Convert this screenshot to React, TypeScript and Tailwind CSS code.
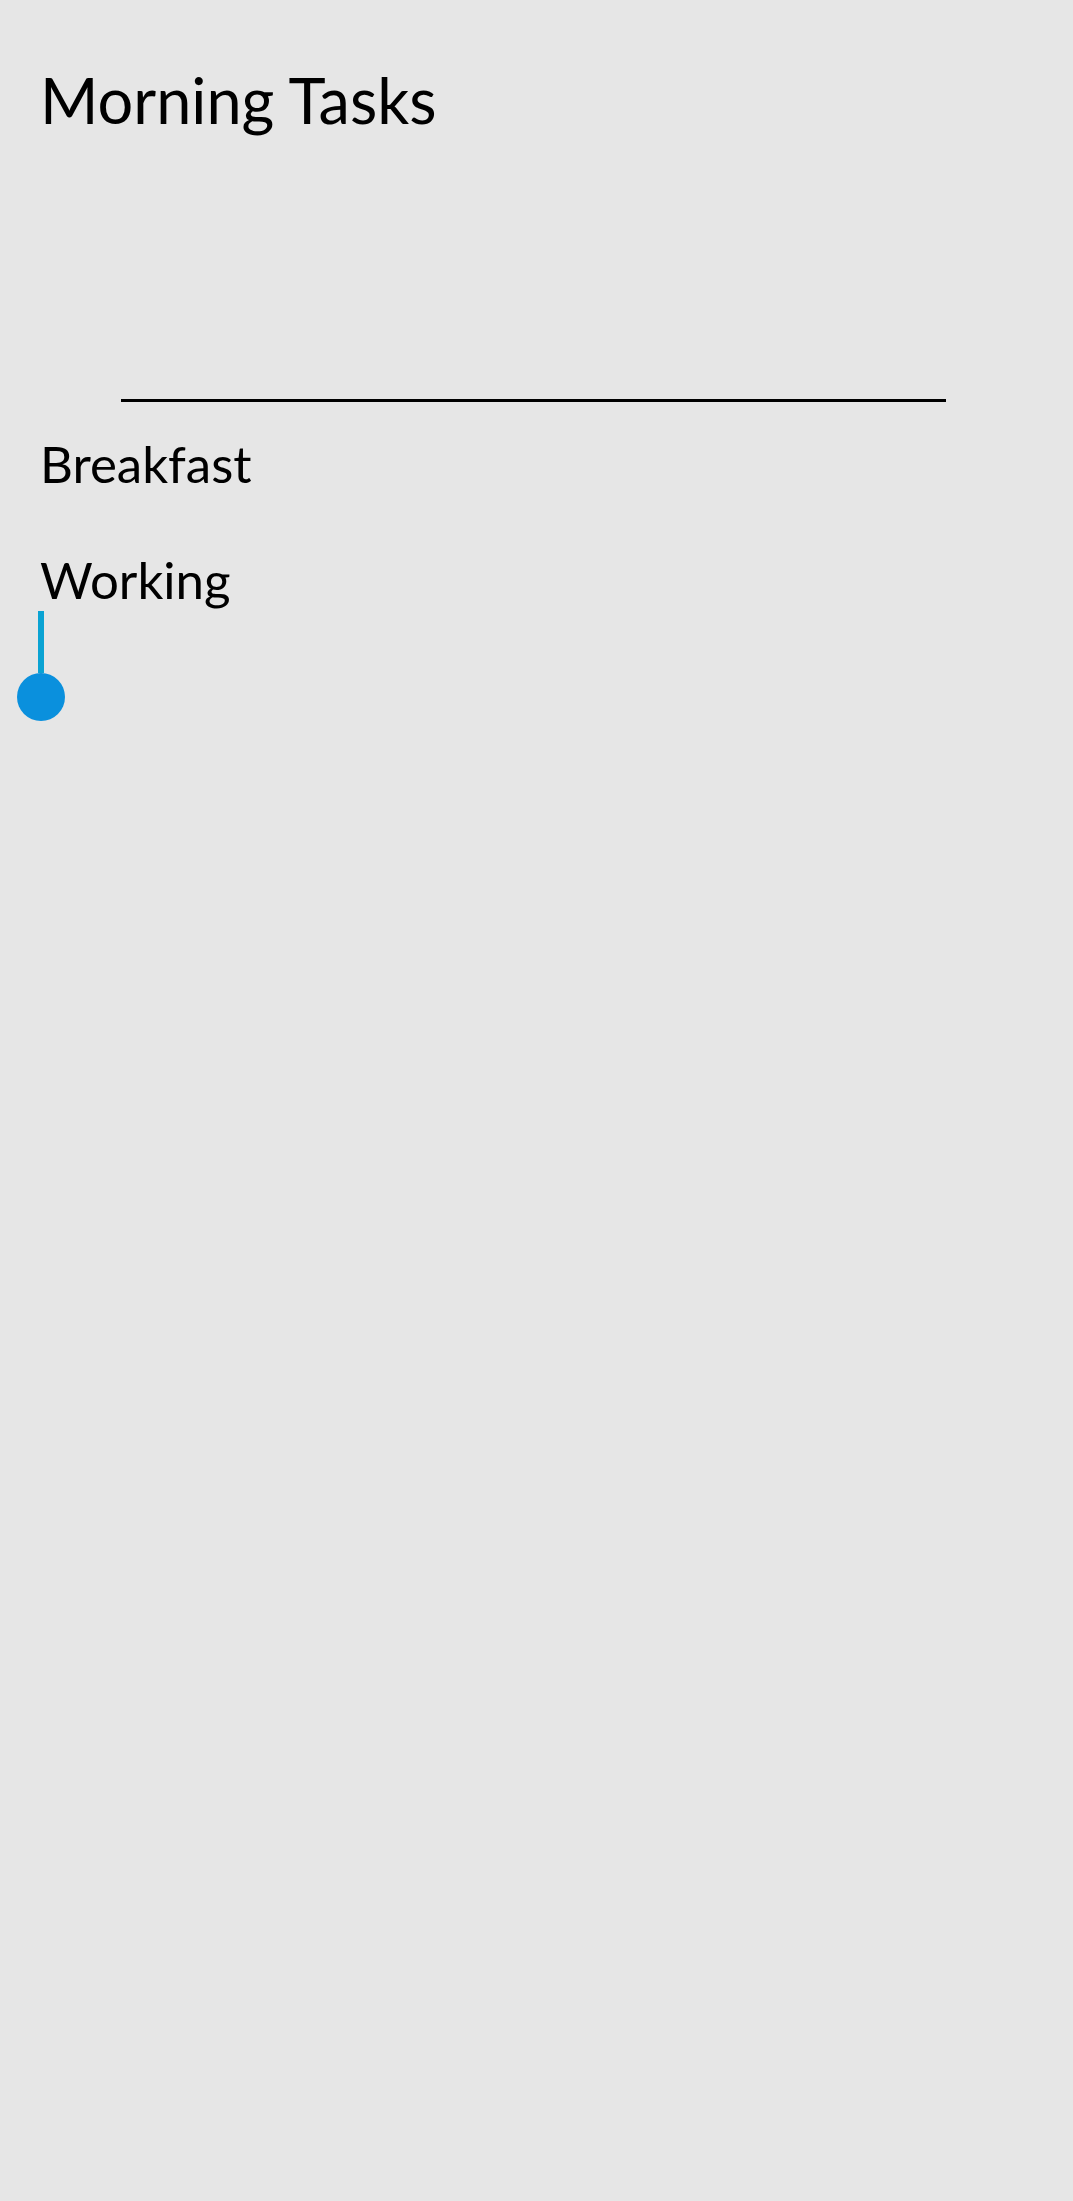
export default function App() {
  return (
    <div className="min-h-[2201px] bg-[#e6e6e6] font-['Lato',sans-serif] text-black">
      <div className="px-10 pt-[64px]">
        <h1 className="text-[63px] leading-[72px] font-normal">Morning Tasks</h1>
      </div>

      <div className="mt-[263px] ml-[121px] h-[3px] w-[825px] bg-black" />

      <div className="px-10 pt-[31px]">
        <p className="text-[51px] leading-[62px]">Breakfast</p>
        <p className="mt-[54px] text-[51px] leading-[62px]">Working</p>
      </div>

      {/* pin marker */}
      <div className="ml-[17px] flex w-12 flex-col items-center">
        <div className="h-[62px] w-[6px] bg-[#0aa3d3]" />
        <div className="h-12 w-12 rounded-full bg-[#0a90dd]" />
      </div>
    </div>
  );
}
